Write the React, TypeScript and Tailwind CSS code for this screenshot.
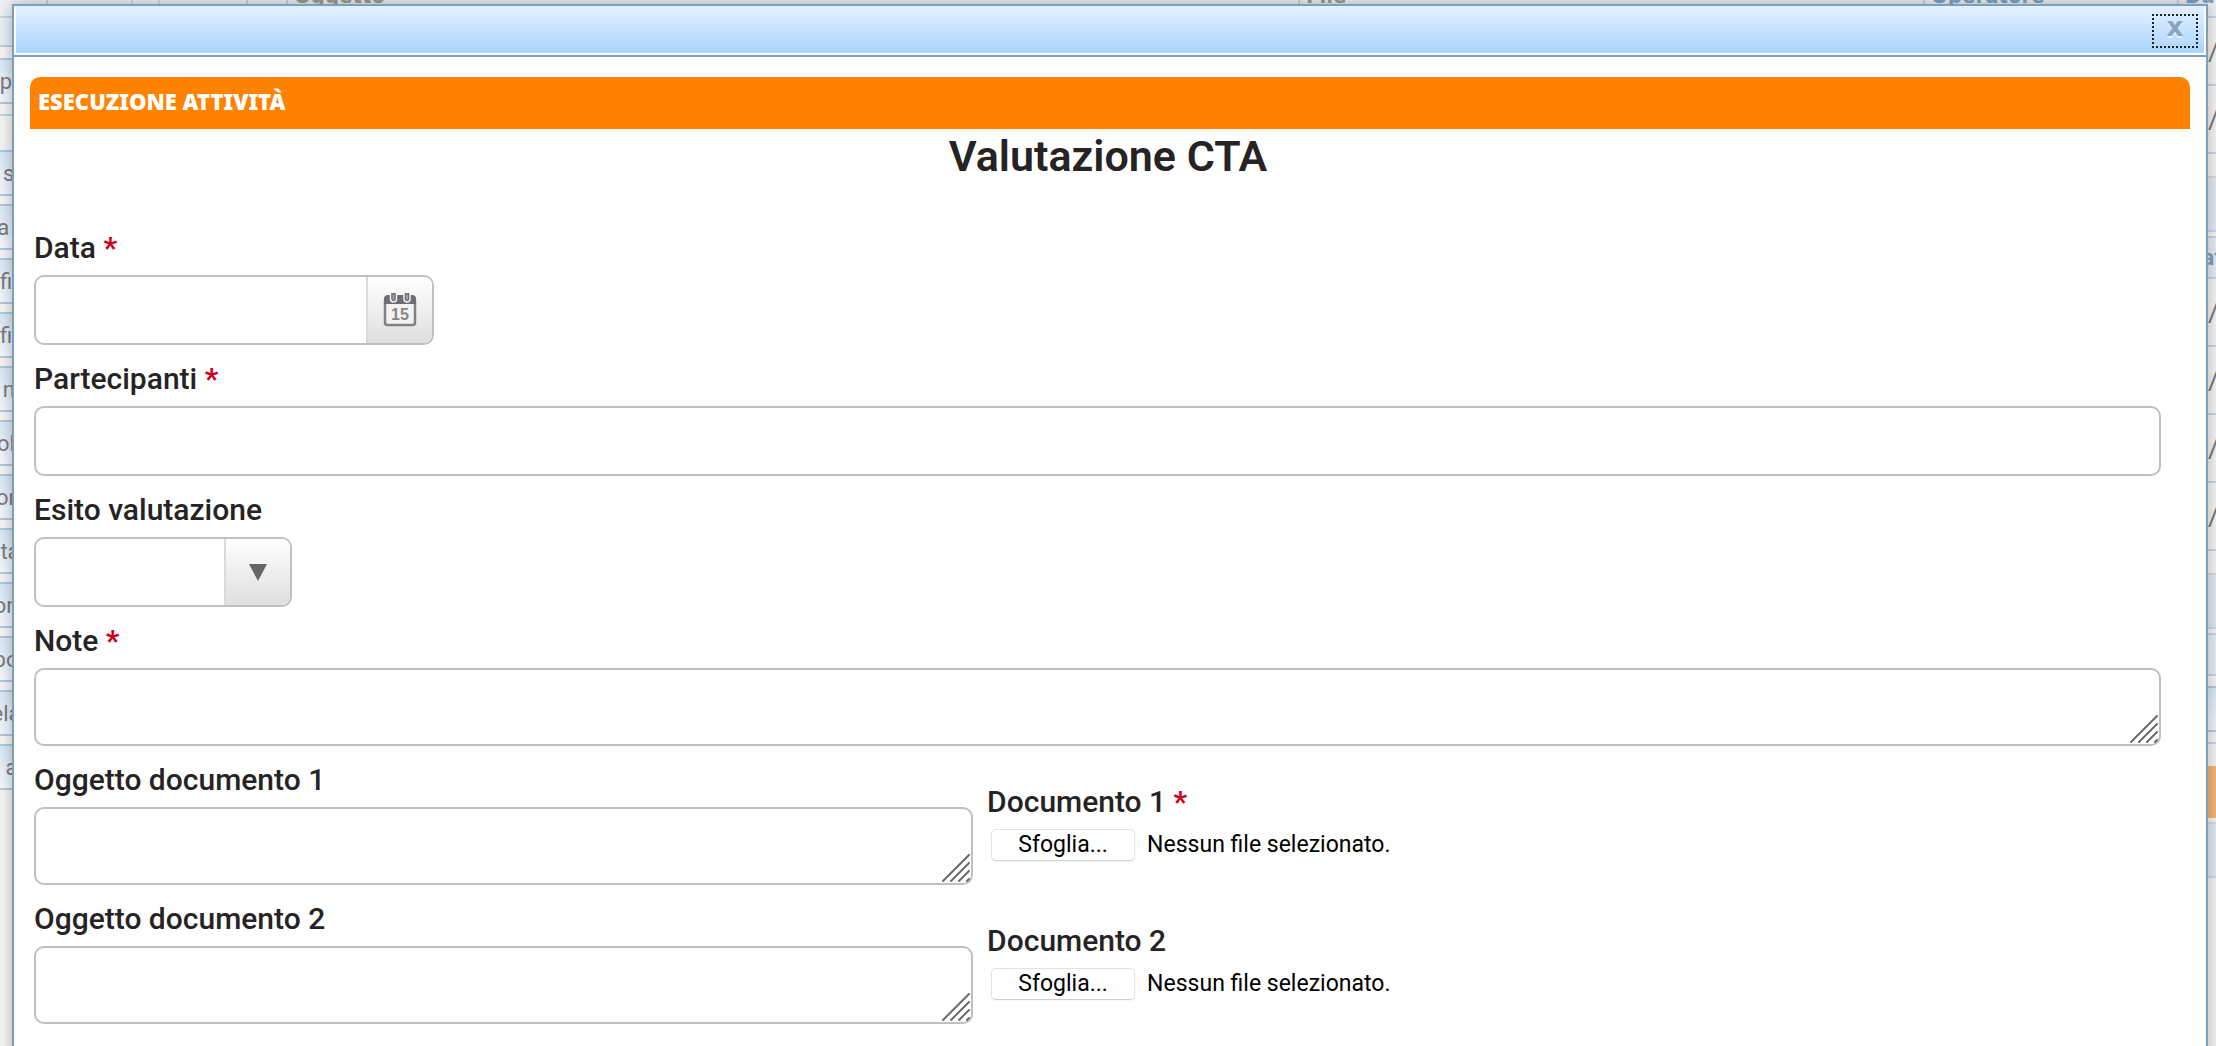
import { useId, useRef } from 'react'

const BACK_LABELS = [' s', 'a ', 'fi', 'fi', ' n', 'ol', 'or', 'rta', 'on', 'po', 'ela', '  a']

const CalendarIcon = () => (
  <svg viewBox="0 0 34 34" className="h-[34px] w-[34px]" aria-hidden="true">
    <rect x="2" y="5" width="30" height="27" rx="2.500" fill="#f3f3f3" stroke="#808085" strokeWidth="2.500" />
    <path d="M1 11V6a4 4 0 0 1 4-4h24a4 4 0 0 1 4 4v5z" fill="#6d6d73" />
    <path d="M7.500 0v6a3 3 0 0 0 6 0V0M21 0v6a3 3 0 0 0 6 0V0" fill="#6d6d73" stroke="#f3f3f3" strokeWidth="1.500" />
    <path d="M10.500 2v4M24 2v4" stroke="#a0a0a4" strokeWidth="2" strokeLinecap="round" />
    <text x="17" y="27" textAnchor="middle" fontSize="16" fontWeight="700" fontFamily="Liberation Sans, sans-serif" fill="#85858a">
      15
    </text>
  </svg>
)

const ResizeGrip = () => (
  <svg
    viewBox="0 0 28 28"
    className="pointer-events-none absolute right-[3px] bottom-[3px] h-7 w-7"
    stroke="#6b6b6b"
    strokeWidth="2"
    strokeLinecap="round"
    aria-hidden="true"
  >
    <path d="M1 27 27 1M9 27 27 9M17 27 27 17M25 27 27 25" />
  </svg>
)

const labelClass = 'block pb-px text-[30px] leading-[53px] font-medium text-[#262324]'
const boxClass = 'rounded-[10px] border-2 border-[#c0c0c0] bg-white'

const Required = () => <span className="font-bold text-[#cc0022]"> *</span>

const FieldLabel = ({ id, text, required }: { id: string; text: string; required?: boolean }) => (
  <label htmlFor={id} className={`${labelClass} pt-[7px]`}>
    {text}
    {required && <Required />}
  </label>
)

const NoteField = ({ text, required }: { text: string; required?: boolean }) => {
  const id = useId()
  return (
    <div>
      <FieldLabel id={id} text={text} required={required} />
      <div className="relative">
        <textarea id={id} className={`${boxClass} block h-[78px] w-full resize-none px-3 py-2 text-2xl`} />
        <ResizeGrip />
      </div>
    </div>
  )
}

const FileField = ({ text, required }: { text: string; required?: boolean }) => {
  const id = useId()
  const fileRef = useRef<HTMLInputElement>(null)
  return (
    <div>
      <label htmlFor={id} className={`${labelClass} pt-[29px]`}>
        {text}
        {required && <Required />}
      </label>
      <div className="ml-1 flex items-center gap-3 text-[23px] leading-7 text-black">
        <input id={id} ref={fileRef} type="file" className="hidden" />
        <button
          type="button"
          onClick={() => fileRef.current?.click()}
          className="h-8 w-36 rounded-[5px] border border-[#e2e2e2] border-b-[#cfcfcf] bg-white shadow-xs"
        >
          Sfoglia...
        </button>
        <span>Nessun file selezionato.</span>
      </div>
    </div>
  )
}

const BackButton = ({ text }: { text: string }) => (
  <div className="flex h-[46px] justify-center border-y-2 border-[#b5cbe0] bg-linear-to-b from-[#dcebf9] to-[#f6faff] text-[22px] leading-[44px] whitespace-pre text-[#7d7d7d]">
    {text}
  </div>
)

const DateCell = ({ text }: { text: string }) => (
  <div className="h-[68px] border-b-2 border-[#cbd7e6] text-[26px] leading-[68px] text-[#77777d]">{text}</div>
)

const Pager = () => <div className="h-14 border-t-2 border-b-2 border-t-[#e0dfde] border-b-[#cfdcf0] bg-[#e5ecf7]" />

// The page that stays visible round the edges of the dialog
const BackPage = () => (
  <div aria-hidden="true" className="h-full overflow-hidden">
    <div className="-mt-4 flex h-[34px] border-b-2 border-[#cbd7e6] bg-[#f0f2f6] font-['DejaVu_Sans_Condensed','DejaVu_Sans',sans-serif] text-[22px] leading-6 font-bold text-[#a09c92]">
      <div className="w-12 border-r-2 border-[#cbd7e6]" />
      <div className="w-[83px]" />
      <div className="w-[29px] border-x-2 border-[#d3dce8]" />
      <div className="w-[88px] border-r-2 border-[#cbd7e6]" />
      <div className="w-10 border-r-2 border-[#cbd7e6]" />
      <div className="w-[1012px] border-r-2 border-[#cbd7e6] pl-1.5">Oggetto</div>
      <div className="flex-1 pl-1.5">File</div>
      <div className="w-[256px] border-x-2 border-[#cbd7e6] pl-1.5 text-[#7fa3c3]">Operatore</div>
      <div className="w-[37px] overflow-hidden pl-1.5 text-[#7fa3c3]">Data</div>
    </div>
    <div className="flex justify-between">
      <div className="w-3 overflow-hidden">
        <div className="mb-[11px] h-[29px] border-b-2 border-[#bfd0e2] bg-[#ebf1fa]" />
        <BackButton text="p" />
        <div className="mt-2.5 mb-[34px] h-0.5 bg-[#cbd7e6]" />
        <div className="flex flex-col gap-2">
          {BACK_LABELS.map((text, i) => (
            <BackButton key={i} text={text} />
          ))}
        </div>
      </div>
      <div className="w-2 overflow-hidden">
        <DateCell text="/" />
        <DateCell text="/" />
        <div className="h-[22px]" />
        <Pager />
        <div className="mt-1 flex h-[43px] justify-center border-y-2 border-[#cbd7e6] bg-[#ebf0f8] text-[22px] leading-[39px] font-bold text-[#7fa3c3]">
          at
        </div>
        <DateCell text="/" />
        <DateCell text="/" />
        <DateCell text="/" />
        <DateCell text="/" />
        <div className="h-[22px]" />
        <Pager />
        <div className="mt-1 h-[43px] border-y-2 border-[#cbd7e6] bg-[#ebf0f8]" />
        <div className="mt-2.5">
          <BackButton text="" />
        </div>
        <div className="mt-2.5 h-0.5 bg-[#cbd7e6]" />
        <div className="mt-[22px] mb-1 h-[52px] bg-[#f9b97b]" />
        <Pager />
      </div>
    </div>
  </div>
)

export default function App() {
  const dateId = useId()
  const peopleId = useId()
  const outcomeId = useId()

  return (
    <div className="relative h-screen overflow-hidden bg-[#f8f8f8] font-[Roboto,'Liberation_Sans',sans-serif]">
      <BackPage />

      <div
        role="dialog"
        aria-label="Valutazione CTA"
        className="absolute inset-x-0 top-1 mr-2 ml-3 border-2 border-[#7a9fc1] bg-white shadow-[0_0_16px_rgba(0,0,0,0.3)]"
      >
        <div className="border-b-2 border-[#7a9fc1]">
          <div className="flex h-[49px] items-center justify-end border-x-2 border-b-2 border-white bg-linear-to-b from-[#e3f1ff] to-[#abd4ff] bg-clip-padding pt-0.5 pr-1.5">
            <button
              type="button"
              aria-label="Chiudi"
              className="flex h-[34px] w-[46px] items-center justify-center border-2 border-dotted border-[#222] pb-2 font-['DejaVu_Sans',sans-serif] text-[26px] leading-6 font-bold text-[#87a5c1] text-shadow-[0_2px_1px_#e6f2ff]"
            >
              x
            </button>
          </div>
        </div>

        <div className="px-4 pt-5">
          <div className="h-[52px] rounded-t-[10px] bg-[#ff8200] pl-2 font-['Noto_Sans',sans-serif] text-[22px] leading-[48px] font-black text-white">
            ESECUZIONE ATTIVITÀ
          </div>
          <h1 className="mb-[31px] pr-1 text-center text-[43px] leading-[54px] font-semibold text-[#262324]">Valutazione CTA</h1>

          <form className="pr-[29px] pl-1">
            <FieldLabel id={dateId} text="Data" required />
            <div className={`${boxClass} flex h-[70px] w-[400px] overflow-hidden`}>
              <input id={dateId} type="text" className="min-w-0 flex-1 px-3 text-2xl outline-none" />
              <button
                type="button"
                aria-label="Scegli data"
                className="flex w-[66px] items-center justify-center border-l-2 border-[#dadada] bg-linear-to-b from-white to-[#dfdfdf]"
              >
                <CalendarIcon />
              </button>
            </div>

            <FieldLabel id={peopleId} text="Partecipanti" required />
            <input id={peopleId} type="text" className={`${boxClass} block h-[70px] w-full px-3 text-2xl`} />

            <FieldLabel id={outcomeId} text="Esito valutazione" />
            <div className={`${boxClass} flex h-[70px] w-[258px] overflow-hidden`}>
              <select id={outcomeId} className="min-w-0 flex-1 appearance-none px-3 text-2xl outline-none" />
              <span className="flex w-[66px] items-center justify-center border-l-2 border-[#dadada] bg-linear-to-b from-white to-[#dfdfdf]">
                <svg viewBox="0 0 18 17" className="h-[17px] w-[18px]" aria-hidden="true">
                  <path d="M0 0h18L9 17z" fill="#666" />
                </svg>
              </span>
            </div>

            <NoteField text="Note" required />

            <div className="grid grid-cols-[4fr_5fr] gap-x-3.5">
              <NoteField text="Oggetto documento 1" />
              <FileField text="Documento 1" required />
              <NoteField text="Oggetto documento 2" />
              <FileField text="Documento 2" />
              <NoteField text="Oggetto documento 3" />
              <FileField text="Documento 3" />
            </div>
          </form>
        </div>
      </div>
    </div>
  )
}
